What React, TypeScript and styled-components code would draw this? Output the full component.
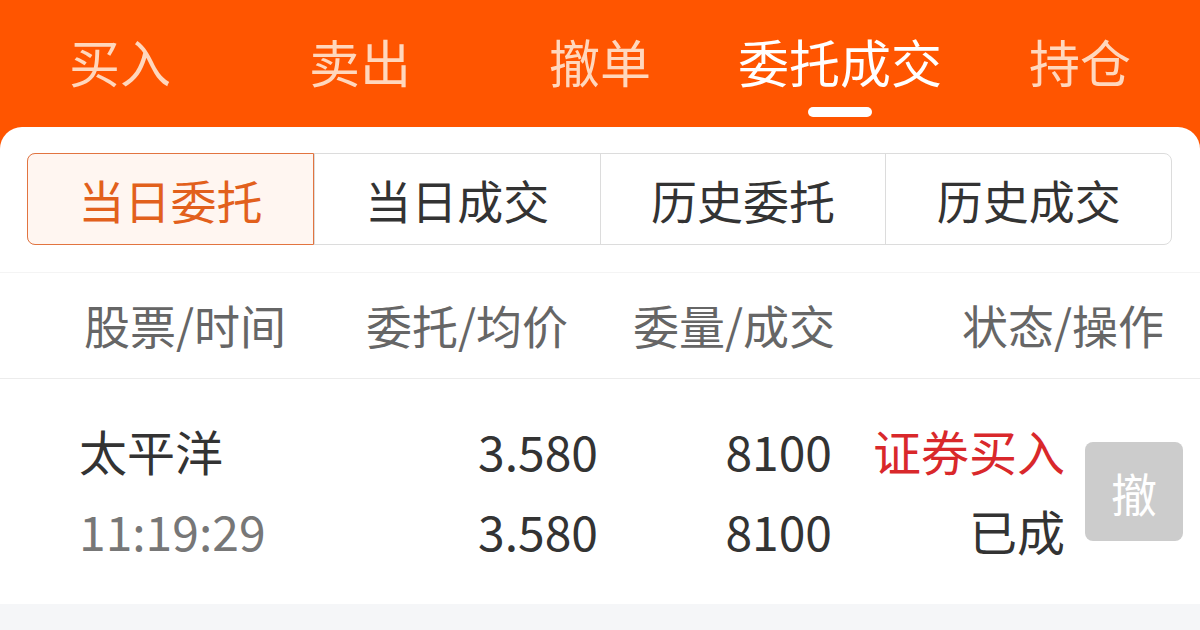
import { FC } from "react";
import styled, { createGlobalStyle } from "styled-components";

const GlobalStyle = createGlobalStyle`
  html, body {
    margin: 0;
    padding: 0;
    width: 1200px;
    height: 630px;
    overflow: hidden;
    font-family: "Noto Sans CJK SC", "Noto Sans", sans-serif;
  }
`;

const Page = styled.div`
  width: 1200px;
  height: 630px;
  background: #ff5500;
  display: flex;
  flex-direction: column;
`;

const TopTabs = styled.nav`
  height: 127px;
  display: grid;
  grid-template-columns: repeat(5, 1fr);
`;

const TopTab = styled.div<{ active?: boolean }>`
  display: flex;
  flex-direction: column;
  align-items: center;
  padding-top: 36px;
  font-size: 51px;
  line-height: 51px;
  color: ${({ active }) => (active ? "#ffffff" : "#ffd7bd")};
`;

const Indicator = styled.span`
  margin-top: 20px;
  width: 64px;
  height: 10px;
  border-radius: 5px;
  background: #ffffff;
`;

const Card = styled.main`
  flex: 1;
  background: #ffffff;
  border-radius: 22px 22px 0 0;
  display: flex;
  flex-direction: column;
  overflow: hidden;
`;

const Segments = styled.div`
  margin: 26px 28px 0 27px;
  height: 92px;
  display: grid;
  grid-template-columns: repeat(4, 1fr);
  border: 1px solid #dcdcdc;
  border-radius: 8px;
  box-sizing: border-box;
`;

const Segment = styled.div<{ active?: boolean }>`
  display: flex;
  align-items: center;
  justify-content: center;
  font-size: 46px;
  color: ${({ active }) => (active ? "#e2601c" : "#333333")};
  background: ${({ active }) => (active ? "#fff6f1" : "transparent")};
  border-left: 1px solid #dcdcdc;
  margin: -1px 0;
  ${({ active }) =>
    active &&
    `
    border: 1px solid #e27440;
    border-radius: 8px 0 0 8px;
    margin: -1px 0 -1px -1px;
  `}

  &:first-child {
    border-left: ${({ active }) => (active ? "1px solid #e27440" : "none")};
  }
`;

const HeadRow = styled.div`
  margin-top: 27px;
  height: 107px;
  border-top: 1px solid #f4f4f4;
  border-bottom: 1px solid #ececec;
  display: grid;
  grid-template-columns: 282px 267px 326px 1fr;
  align-items: center;
  padding: 0 36px 4px 84px;
  box-sizing: border-box;
  font-size: 46px;
  color: #666666;
`;

const HeadCell = styled.div<{ right?: boolean }>`
  text-align: ${({ right }) => (right ? "right" : "left")};
  white-space: nowrap;
`;

const DataRow = styled.div`
  height: 225px;
  display: grid;
  grid-template-columns: 321px 198px 234px 233px 98px;
  align-items: center;
  padding: 0 17px 4px 79px;
  box-sizing: border-box;
`;

const Cell = styled.div<{ right?: boolean }>`
  display: flex;
  flex-direction: column;
  align-items: ${({ right }) => (right ? "flex-end" : "flex-start")};
  font-size: 48px;
  line-height: 80px;
  color: #333333;
  white-space: nowrap;
`;

const Line = styled.span<{ tone?: "muted" | "red" }>`
  color: ${({ tone }) =>
    tone === "muted" ? "#777777" : tone === "red" ? "#d9282b" : "inherit"};
`;

const CancelButton = styled.button`
  margin: 4px 0 0 20px;
  width: 98px;
  height: 99px;
  border: none;
  border-radius: 8px;
  background: #cccccc;
  color: #ffffff;
  font-family: inherit;
  font-size: 46px;
  padding: 0;
`;

const Footer = styled.div`
  flex: 1;
  background: #f5f6f8;
`;

const topTabs = ["买入", "卖出", "撤单", "委托成交", "持仓"];
const segments = ["当日委托", "当日成交", "历史委托", "历史成交"];

const App: FC = () => (
  <>
    <GlobalStyle />
    <Page>
      <TopTabs>
        {topTabs.map((t, i) => (
          <TopTab key={t} active={i === 3}>
            {t}
            {i === 3 && <Indicator />}
          </TopTab>
        ))}
      </TopTabs>
      <Card>
        <Segments>
          {segments.map((s, i) => (
            <Segment key={s} active={i === 0}>
              {s}
            </Segment>
          ))}
        </Segments>
        <HeadRow>
          <HeadCell>股票/时间</HeadCell>
          <HeadCell>委托/均价</HeadCell>
          <HeadCell>委量/成交</HeadCell>
          <HeadCell right>状态/操作</HeadCell>
        </HeadRow>
        <DataRow>
          <Cell>
            <Line>太平洋</Line>
            <Line tone="muted">11:19:29</Line>
          </Cell>
          <Cell right>
            <Line>3.580</Line>
            <Line>3.580</Line>
          </Cell>
          <Cell right>
            <Line>8100</Line>
            <Line>8100</Line>
          </Cell>
          <Cell right>
            <Line tone="red">证券买入</Line>
            <Line>已成</Line>
          </Cell>
          <CancelButton type="button">撤</CancelButton>
        </DataRow>
        <Footer />
      </Card>
    </Page>
  </>
);

export default App;
